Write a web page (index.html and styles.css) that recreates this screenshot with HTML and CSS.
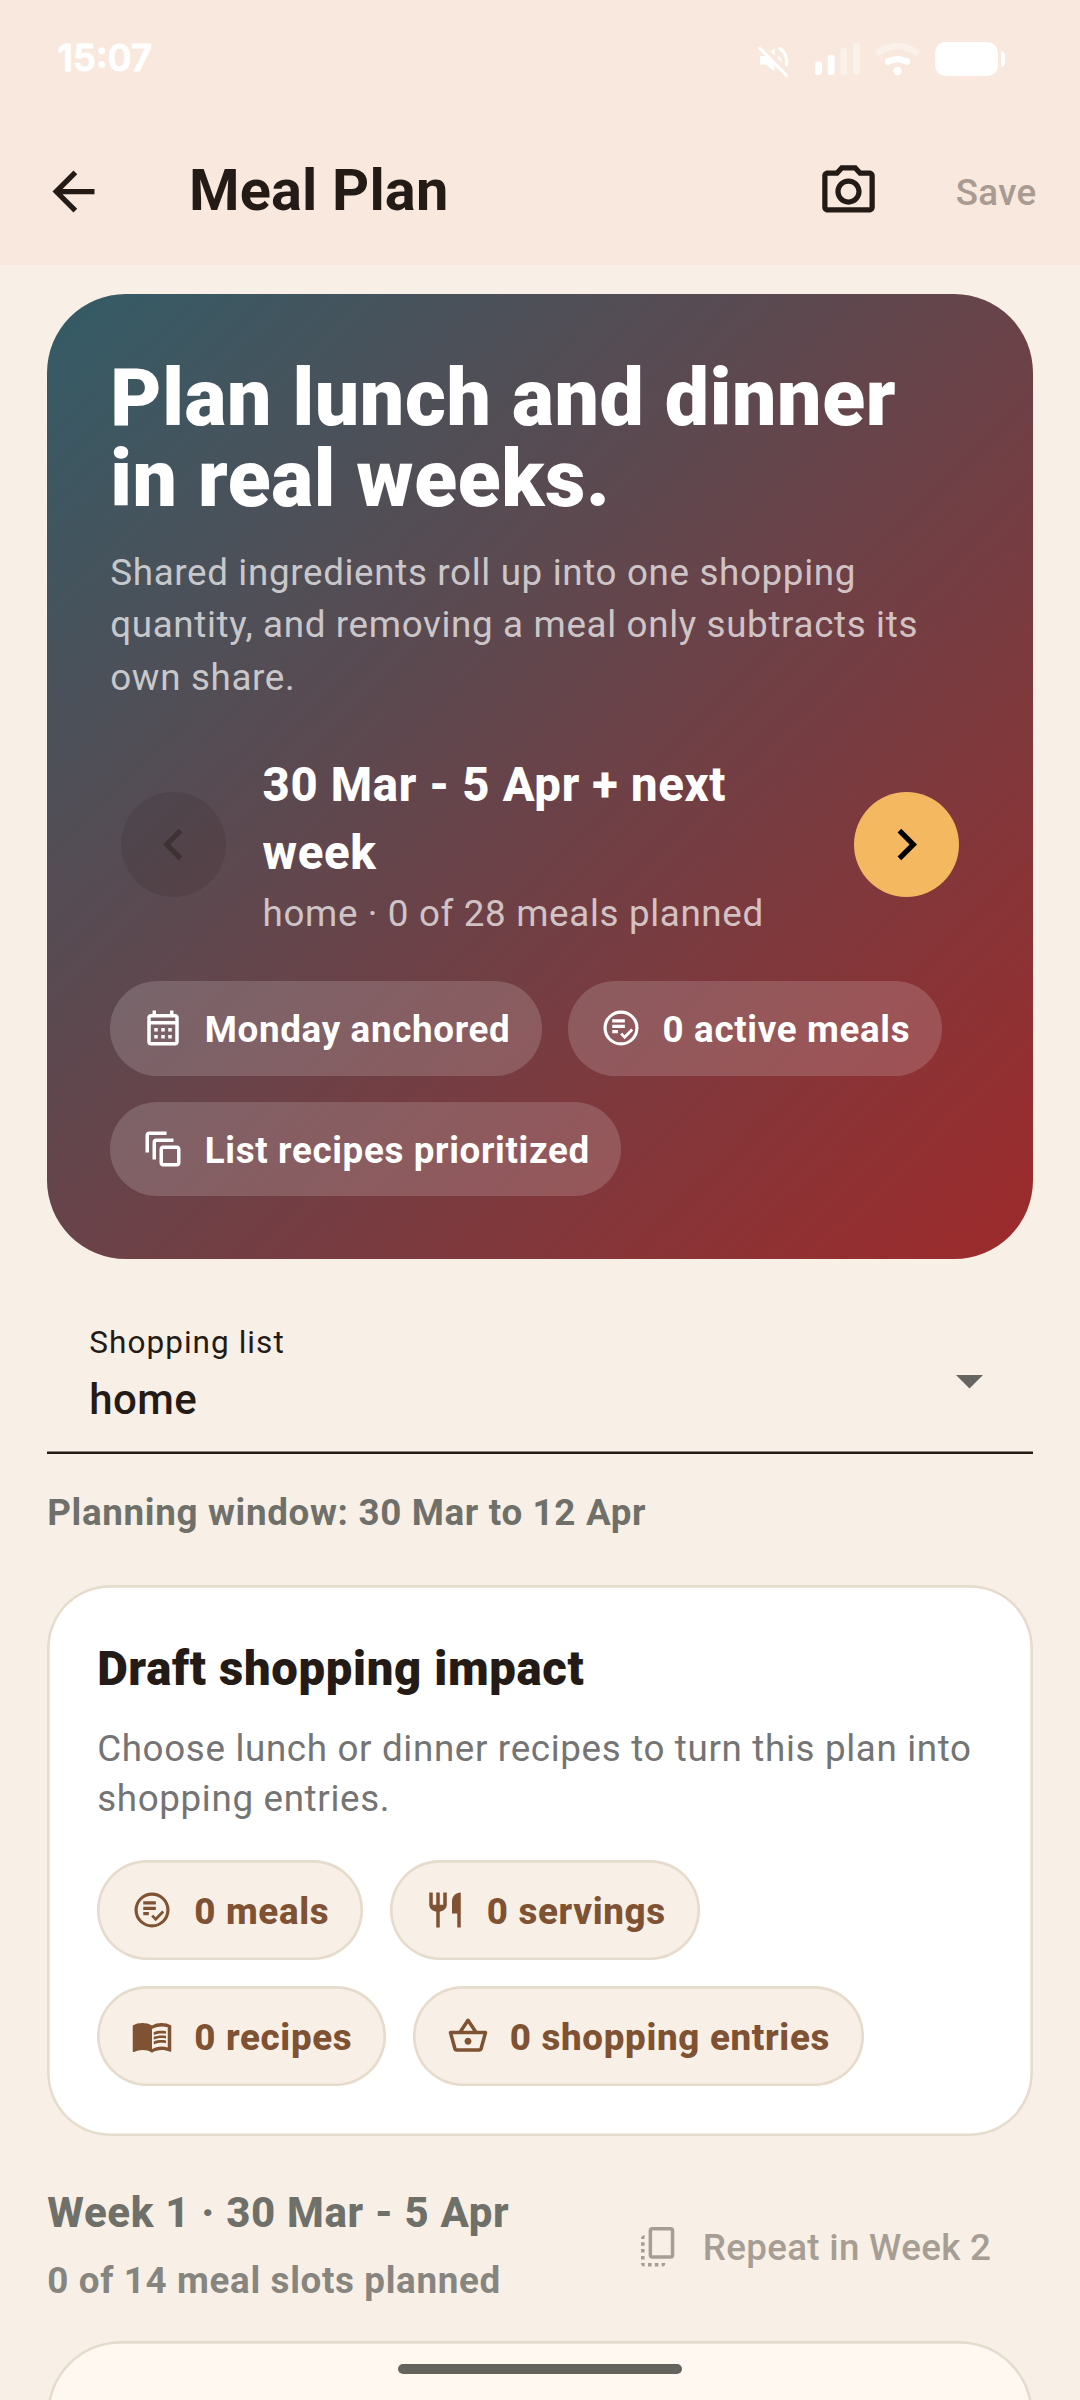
FILE: index.html
```html
<!DOCTYPE html>
<html lang="en">
<head>
<meta charset="utf-8">
<title>Meal Plan</title>
<link rel="stylesheet" href="styles.css">
</head>
<body>
<svg class="defs" width="0" height="0" aria-hidden="true">
  <symbol id="i-list-check" viewBox="0 0 24 24"><circle cx="12" cy="12" r="9.1" fill="none" stroke="currentColor" stroke-width="1.8"/><path fill="currentColor" d="M7 7h7.2v1.9H7zM7 10.1h7.2V12H7zM7 13.2h3.2v1.8H7z"/><path fill="none" stroke="currentColor" stroke-width="1.6" d="M12.1 15.2l2 2.1 4.300-4.400"/></symbol>
  <symbol id="i-calendar" viewBox="0 0 24 24"><path fill="currentColor" d="M7 12h2v2H7v-2M21 6v14c0 1.110-.9 2-2 2H5c-1.110 0-2-.9-2-2V6c0-1.100.9-2 2-2h1V2h2v2h8V2h2v2h1c1.110 0 2 .9 2 2M5 8h14V6H5v2M19 20V10H5v10h14M15 14v-2h2v2h-2M11 14v-2h2v2h-2M7 16h2v2H7v-2M15 18v-2h2v2h-2M11 18v-2h2v2h-2Z"/></symbol>
  <symbol id="i-stack" viewBox="0 0 24 24"><path fill="currentColor" fill-rule="evenodd" d="M4 2c-1.110 0-2 .9-2 2v10h2V4h10V2H4m4 4c-1.110 0-2 .9-2 2v10h2V8h10V6H8m4 4c-1.110 0-2 .9-2 2v8c0 1.110.9 2 2 2h8c1.110 0 2-.9 2-2v-8c0-1.100-.9-2-2-2h-8m0 2h8v8h-8v-8Z"/></symbol>
  <symbol id="i-cutlery" viewBox="0 0 24 24"><path fill="currentColor" d="M11 9H9V2H7v7H5V2H3v7c0 2.120 1.800 3.600 4 3.970V22h2v-9.030c2.200-.370 4-1.850 4-3.970V2h-2v7M16 7v7h3v8h2V2c-2.760 0-5 2.240-5 5Z"/></symbol>
  <symbol id="i-book" viewBox="0 0 24 24"><path fill="currentColor" fill-rule="evenodd" d="M17.500 4.500c-1.950 0-4.050.4-5.500 1.500-1.450-1.100-3.550-1.500-5.500-1.500S2.450 4.900 1 6v14.650c0 .65.730.45.750.45C3.100 20.450 5.050 20 6.500 20c1.950 0 4.050.4 5.500 1.500 1.350-.85 3.800-1.500 5.500-1.500 1.650 0 3.350.3 4.750 1.050.41.21.75-.19.75-.45V6c-1.490-1.120-3.630-1.500-5.500-1.500M21 18.500c-1.100-.35-2.300-.5-3.500-.5-1.700 0-4.150.65-5.500 1.500V8c1.350-.85 3.800-1.500 5.500-1.500 1.200 0 2.400.15 3.500.5v11.500z"/><path fill="currentColor" d="M17.500 10.500c.88 0 1.730.09 2.500.26V9.240c-.79-.15-1.640-.24-2.500-.24-1.700 0-3.240.29-4.500.83v1.660c1.130-.64 2.700-.99 4.500-.99zM13 12.490v1.660c1.130-.64 2.700-.99 4.500-.99.88 0 1.730.09 2.500.26V11.900c-.79-.15-1.640-.24-2.500-.24-1.700 0-3.240.3-4.500.83zM17.500 14.330c-1.700 0-3.240.29-4.500.83v1.660c1.130-.64 2.700-.99 4.500-.99.88 0 1.730.09 2.500.26v-1.520c-.79-.16-1.640-.24-2.500-.24z"/></symbol>
  <symbol id="i-basket" viewBox="0 0 24 24"><path fill="currentColor" fill-rule="evenodd" d="M22 9h-4.790l-4.380-6.560c-.19-.28-.51-.42-.83-.42s-.64.14-.83.43L6.790 9H2c-.55 0-1 .45-1 1 0 .09.010.18.040.27l2.540 9.270c.23.84 1 1.460 1.920 1.460h13c.92 0 1.690-.62 1.930-1.460l2.540-9.270L23 10c0-.55-.45-1-1-1zM12 4.800L14.800 9H9.200L12 4.800zM18.500 19l-12.990.010L3.310 11H20.700l-2.200 8zM12 13c-1.100 0-2 .9-2 2s.9 2 2 2 2-.9 2-2-.9-2-2-2z"/></symbol>
</svg>

<header class="top">
  <div class="status">
    <span class="clock">15:07</span>
    <svg class="status-icons" width="250" height="40" viewBox="755 40 250 40" fill="#fff">
      <path d="M760 56h5.500l9-8v23.500l-9-7H760z"/>
      <path d="M780 48.500a16 16 0 0 1 6.500 16" fill="none" stroke="#fff" stroke-width="3.400" stroke-linecap="round"/>
      <path d="M774.500 50l-3 2.500 3 3z M778 55.500q4.500 4 3.500 6.500l-3.500-3z"/>
      <path d="M762 46.500L789 73" stroke="#f8e8de" stroke-width="5"/>
      <path d="M760 48.500L786.500 75.500" stroke="#fff" stroke-width="3.200" stroke-linecap="round"/>
      <rect x="815" y="61.500" width="7" height="13.500" rx="3"/>
      <rect x="827.700" y="54.700" width="7" height="20.300" rx="3"/>
      <rect x="840.200" y="48" width="7" height="27" rx="3" opacity=".4"/>
      <rect x="853" y="42.700" width="7" height="32.300" rx="3" opacity=".4"/>
      <path d="M879 52.300Q897.500 39.800 916 52.300" fill="none" stroke="#fff" stroke-width="6.500" stroke-linecap="round" opacity=".4"/>
      <path d="M888 61.500Q897.500 57 907 61.500" fill="none" stroke="#fff" stroke-width="6.500" stroke-linecap="round"/>
      <circle cx="897.500" cy="71" r="4.200"/>
      <rect x="935" y="42" width="63" height="34" rx="10.500"/>
      <path d="M1001 51q4 .5 4 4v8q0 3.500-4 4z"/>
    </svg>
  </div>
  <div class="bar">
    <svg class="back" width="63" height="63" viewBox="0 0 24 24"><path fill="#241a16" d="M20 11H7.830l5.590-5.590L12 4l-8 8 8 8 1.410-1.410L7.830 13H20v-2z"/></svg>
    <h1 class="title">Meal Plan</h1>
    <svg class="camera" width="63" height="63" viewBox="0 0 24 24"><path fill="#241a16" fill-rule="evenodd" d="M20 4h-3.170L15 2H9L7.170 4H4c-1.100 0-2 .9-2 2v12c0 1.100.9 2 2 2h16c1.100 0 2-.9 2-2V6c0-1.100-.9-2-2-2zm0 14H4V6h4.050l1.830-2h4.240l1.830 2H20v12zM12 7c-2.760 0-5 2.240-5 5s2.240 5 5 5 5-2.240 5-5-2.240-5-5-5zm0 8c-1.650 0-3-1.350-3-3s1.350-3 3-3 3 1.350 3 3-1.350 3-3 3z"/></svg>
    <span class="save">Save</span>
  </div>
</header>

<main class="content">
  <section class="hero">
    <h2 class="hero-title">Plan lunch and dinner<br>in real weeks.</h2>
    <p class="hero-text">Shared ingredients roll up into one shopping<br>quantity, and removing a meal only subtracts its<br>own share.</p>
    <div class="week-nav">
      <div class="nav-btn nav-prev"><svg width="63" height="63" viewBox="0 0 24 24"><path fill="currentColor" d="M15.410 7.410L14 6l-6 6 6 6 1.410-1.410L10.830 12z"/></svg></div>
      <div class="nav-copy">
        <div class="nav-title">30 Mar - 5 Apr + next<br>week</div>
        <div class="nav-sub">home · 0 of 28 meals planned</div>
      </div>
      <div class="nav-btn nav-next"><svg width="63" height="63" viewBox="0 0 24 24"><path fill="currentColor" d="M8.590 16.590L10 18l6-6-6-6-1.410 1.410L13.170 12z"/></svg></div>
    </div>
    <div class="chips">
      <div class="chip"><svg class="icon"><use href="#i-calendar"/></svg><span>Monday anchored</span></div>
      <div class="chip"><svg class="icon"><use href="#i-list-check"/></svg><span>0 active meals</span></div>
      <div class="chip"><svg class="icon"><use href="#i-stack"/></svg><span>List recipes prioritized</span></div>
    </div>
  </section>

  <section class="select">
    <div class="select-copy">
      <div class="select-label">Shopping list</div>
      <div class="select-value">home</div>
    </div>
    <svg class="caret" width="27" height="14" viewBox="0 0 27 14"><path d="M0 0h27L13.500 13.500z" fill="#666562"/></svg>
  </section>

  <p class="window">Planning window: 30 Mar to 12 Apr</p>

  <section class="impact">
    <h3 class="impact-title">Draft shopping impact</h3>
    <p class="impact-text">Choose lunch or dinner recipes to turn this plan into<br>shopping entries.</p>
    <div class="chips">
      <div class="chip"><svg class="icon"><use href="#i-list-check"/></svg><span>0 meals</span></div>
      <div class="chip"><svg class="icon"><use href="#i-cutlery"/></svg><span>0 servings</span></div>
      <div class="chip"><svg class="icon"><use href="#i-book"/></svg><span>0 recipes</span></div>
      <div class="chip"><svg class="icon"><use href="#i-basket"/></svg><span>0 shopping entries</span></div>
    </div>
  </section>

  <section class="week-head">
    <div>
      <div class="week-title">Week 1 · 30 Mar - 5 Apr</div>
      <div class="week-sub">0 of 14 meal slots planned</div>
    </div>
    <div class="repeat">
      <svg width="34" height="40" viewBox="0 0 34 40" fill="#a69e94"><rect x="9.350" y="1.750" width="22.200" height="28.200" rx="2" fill="none" stroke="#a69e94" stroke-width="3.500"/><path d="M0 11.900q0-3.600 3.600-3.600v3.600zM0 15.300h3.600v3.500H0zM0 22.100h3.600v3.500H0zM0 29h3.600v3.500H0zM0 36h3.600v3.600Q0 39.600 0 36zM7 36h3.600v3.600H7zM13.800 36h3.600v3.600h-3.600zM20.700 36h3.600q0 3.600-3.600 3.600z"/></svg>
      <span>Repeat in Week 2</span>
    </div>
  </section>

  <section class="day-card"></section>
</main>
<div class="home-indicator"></div>
</body>
</html>
```
FILE: styles.css
```css
* { box-sizing: border-box; }
body {
  margin: 0;
  width: 1080px;
  height: 2400px;
  overflow: hidden;
  position: relative;
  background: #f8f0e6;
  color: #241a16;
  font-family: Roboto, sans-serif;
  font-size: 36.75px;
  letter-spacing: .66px;
}
h1, h2, h3, p { margin: 0; }
svg { display: block; flex: none; }
.defs { position: absolute; }
span { white-space: nowrap; }

.top { height: 265px; background: #f8e8de; }
.status { height: 118px; display: flex; align-items: flex-start; justify-content: space-between; padding: 40px 75px 0 57.500px; }
.clock {
  color: #fff;
  font: 600 36.500px/37px Inter, sans-serif;
  letter-spacing: 0;
  -webkit-text-stroke: 1px #fff;
}
.bar { height: 147px; display: flex; align-items: center; padding: 0 43.500px 0 42px; }
.title { margin: -3px 0 0 84px; flex: 1; font-size: 57.75px; line-height: 68px; font-weight: 700; letter-spacing: .15px; }
.camera { margin-right: 76px; }
.save { padding-top: 2px; color: #a99b92; font-weight: 500; letter-spacing: .3px; }

.content { height: 2135px; overflow: hidden; padding: 28.500px 47.250px 0; }
.hero {
  height: 965.750px;
  padding: 64px 63px 0;
  border-radius: 78.750px;
  background: linear-gradient(to bottom right, #335c67, #9e2a2b);
  color: #fff;
}
.hero-title { font-size: 78.750px; line-height: 81.100px; font-weight: 900; }
.hero-text { margin-top: 27.250px; line-height: 52.500px; color: rgba(255, 255, 255, .7); }
.week-nav { margin-top: 45px; display: flex; align-items: center; padding: 0 10.500px; }
.nav-btn { width: 105px; height: 105px; border-radius: 50%; display: grid; place-items: center; flex: none; }
.nav-prev { background: rgba(36, 26, 22, .13); color: rgba(36, 26, 22, .42); }
.nav-next { background: #f4b860; color: #000; }
.nav-copy { flex: 1; margin-left: 36.750px; padding-top: 2px; }
.nav-title { font-size: 47.250px; line-height: 68px; font-weight: 800; }
.nav-sub { line-height: 53px; color: rgba(255, 255, 255, .7); }

.chips { display: flex; flex-wrap: wrap; gap: 26.250px; }
.hero .chips { margin-top: 40.800px; }
.chip {
  display: flex;
  align-items: center;
  gap: 21px;
  height: 94.500px;
  padding: 0 31.500px;
  border-radius: 50px;
  background: rgba(255, 255, 255, .16);
  font-weight: 700;
}
.chip span { padding-top: 2px; }
.icon { width: 42px; height: 42px; }

.select {
  height: 147px;
  margin-top: 47.500px;
  padding: 0 50px 0 42px;
  display: flex;
  justify-content: space-between;
  box-shadow: inset 0 -2.625px #241a16;
}
.select-label { margin-top: 17px; font-size: 31.500px; line-height: 37px; letter-spacing: 1.050px; }
.select-value { margin-top: 14px; font-size: 42px; line-height: 49px; font-weight: 500; letter-spacing: .4px; }
.caret { margin-top: 68px; }

.window { margin-top: 32px; line-height: 53px; font-weight: 700; color: #70706b; }

.impact {
  margin-top: 46px;
  height: 551px;
  padding: 49.875px;
  border-radius: 63px;
  background: #fff;
  box-shadow: inset 0 0 0 2.625px #e6dccd;
}
.impact-title { font-size: 47.250px; line-height: 68px; font-weight: 900; }
.impact-text { margin-top: 21px; line-height: 50px; color: #747474; }
.impact .chips { margin-top: 36.750px; }
.impact .chip {
  height: 99.750px;
  padding: 0 34.125px;
  background: #f8f0e6;
  color: #7f5233;
  font-weight: 800;
  box-shadow: inset 0 0 0 2.625px #e6dccd;
}

.week-head { margin-top: 47px; height: 128px; display: flex; justify-content: space-between; align-items: center; }
.week-title { margin-top: -3px; font-size: 42px; line-height: 63px; font-weight: 800; color: #70706b; }
.week-sub { margin-top: 10px; line-height: 53px; font-weight: 700; color: #868580; }
.week-head > div:first-child { padding-bottom: 3px; }
.repeat { display: flex; align-items: center; gap: 27.500px; padding-right: 41.500px; font-weight: 500; letter-spacing: .3px; color: #a69e94; }
.repeat span { padding-top: 1px; }

.day-card {
  margin-top: 30px;
  height: 200px;
  border-radius: 73.500px;
  background: #fff8f1;
  box-shadow: inset 0 0 0 2.625px #e6dccd;
}
.home-indicator {
  position: absolute;
  left: 398px;
  top: 2364px;
  width: 284px;
  height: 10px;
  border-radius: 5px;
  background: #65635e;
}
```
